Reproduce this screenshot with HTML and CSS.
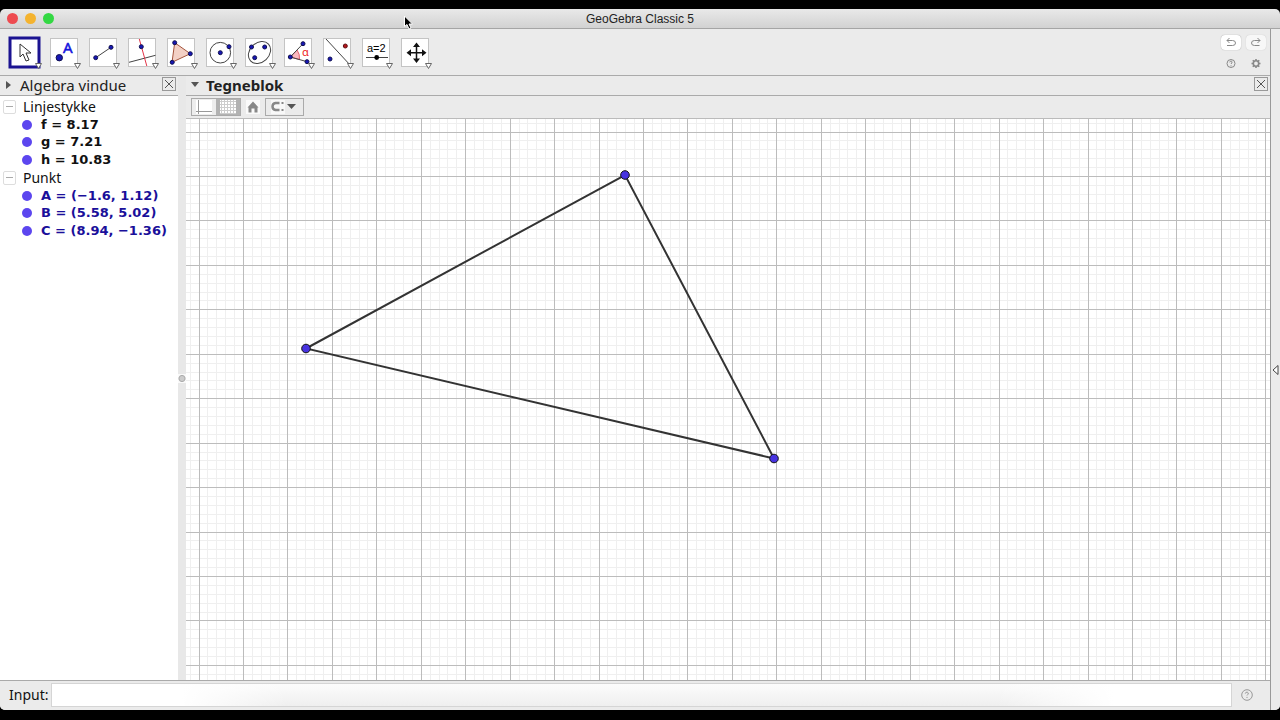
FILE: index.html
```html
<!DOCTYPE html>
<html lang="da">
<head>
<meta charset="utf-8">
<title>GeoGebra Classic 5</title>
<link rel="stylesheet" href="styles.css">
</head>
<body>
<div class="window">
  <header class="titlebar">
    <div class="lights"><button class="light red" aria-label="Luk"></button><button class="light amber" aria-label="Minimer"></button><button class="light green" aria-label="Zoom"></button></div>
    <h1 class="title">GeoGebra Classic 5</h1>
  </header>
  <div class="workspace">
    <main class="main">
      <div class="toolbar">
        <div class="tools">
          <button class="tool" aria-label="Flyt"><svg viewBox="0 0 39 39"><rect class="picked" x="5" y="4" width="29" height="29"/><path d="M15 10V23L18 20L21 27L24 26L21 19H26Z" fill="#fff" stroke="#333"/><path class="more" d="M30.500 29.500H36.500L33.500 34.500Z"/></svg></button>
          <button class="tool" aria-label="Punkt"><svg viewBox="0 0 39 39"><rect class="box" x="6.500" y="4.500" width="27" height="28"/><circle class="pt" cx="15.300" cy="23.700" r="3.200"/><text x="19" y="19" class="letter">A</text><path class="more" d="M30.500 29.500H36.500L33.500 34.500Z"/></svg></button>
          <button class="tool" aria-label="Linjestykke"><svg viewBox="0 0 39 39"><rect class="box" x="6.500" y="4.500" width="27" height="28"/><path class="ink" d="M12.700 23.700L28 13.300"/><circle class="pt" cx="12.700" cy="23.700" r="2"/><circle class="pt" cx="28" cy="13.300" r="2"/><path class="more" d="M30.500 29.500H36.500L33.500 34.500Z"/></svg></button>
          <button class="tool" aria-label="Vinkelret linje"><svg viewBox="0 0 39 39"><rect class="box" x="6.500" y="4.500" width="27" height="28"/><path class="ink" d="M7 28.300L33.500 21.300"/><path d="M17.300 5L24.800 32" stroke="#e33347" fill="none"/><circle class="pt" cx="19.300" cy="12.700" r="2"/><path class="more" d="M30.500 29.500H36.500L33.500 34.500Z"/></svg></button>
          <button class="tool" aria-label="Polygon"><svg viewBox="0 0 39 39"><rect class="box" x="6.500" y="4.500" width="27" height="28"/><path d="M13.700 8.700L29.300 19.700L11 28.300Z" fill="#f3d0c5" stroke="#a4543c"/><circle class="pt" cx="13.700" cy="8.700" r="2"/><circle class="pt" cx="29.300" cy="19.700" r="2"/><circle class="pt" cx="11.200" cy="28.300" r="2"/><path class="more" d="M30.500 29.500H36.500L33.500 34.500Z"/></svg></button>
          <button class="tool" aria-label="Cirkel"><svg viewBox="0 0 39 39"><rect class="box" x="6.500" y="4.500" width="27" height="28"/><circle class="ink" cx="20.300" cy="18.700" r="10.300"/><circle class="pt" cx="20.300" cy="18.700" r="2"/><circle class="pt" cx="29" cy="12.700" r="2"/><path class="more" d="M30.500 29.500H36.500L33.500 34.500Z"/></svg></button>
          <button class="tool" aria-label="Ellipse"><svg viewBox="0 0 39 39"><rect class="box" x="6.500" y="4.500" width="27" height="28"/><ellipse class="ink" cx="20.500" cy="18.500" rx="12.300" ry="9.600" transform="rotate(-43 20.500 18.500)"/><circle class="pt" cx="12.500" cy="13" r="2"/><circle class="pt" cx="25.700" cy="13" r="2"/><circle class="pt" cx="15.700" cy="23.700" r="2"/><path class="more" d="M30.500 29.500H36.500L33.500 34.500Z"/></svg></button>
          <button class="tool" aria-label="Vinkel"><svg viewBox="0 0 39 39"><rect class="box" x="6.500" y="4.500" width="27" height="28"/><path d="M12.300 23L19 16Q22 20 21.500 25.500Z" fill="#fbb9bf" stroke="#e2606c"/><path class="ink" d="M25 9.700L12.300 23L29 27.700"/><text class="alpha" x="24" y="22">α</text><circle class="pt" cx="12.300" cy="23" r="2"/><circle class="pt" cx="25" cy="9.700" r="2"/><circle class="pt" cx="29" cy="27.700" r="2"/><path class="more" d="M30.500 29.500H36.500L33.500 34.500Z"/></svg></button>
          <button class="tool" aria-label="Spejling"><svg viewBox="0 0 39 39"><rect class="box" x="6.500" y="4.500" width="27" height="28"/><path class="ink" d="M9 5L34 32"/><circle class="pt" cx="13" cy="25" r="2"/><circle cx="28.300" cy="12" r="2" fill="#b5161c" stroke="#5e1013"/><path class="more" d="M30.500 29.500H36.500L33.500 34.500Z"/></svg></button>
          <button class="tool" aria-label="Skyder"><svg viewBox="0 0 39 39"><rect class="box" x="6.500" y="4.500" width="27" height="28"/><text class="eq" x="11" y="18">a=2</text><path class="ink" d="M10 23.500H32"/><circle cx="20.700" cy="23.500" r="2.400"/><path class="more" d="M30.500 29.500H36.500L33.500 34.500Z"/></svg></button>
          <button class="tool" aria-label="Flyt tegneblok"><svg viewBox="0 0 39 39"><rect class="box" x="6.500" y="4.500" width="27" height="28"/><path d="M21.500 11V27M13 18.700H30" stroke="#111" stroke-width="1.500"/><path d="M21.500 8.500L25 13H18ZM21.500 29L18 24.500H25ZM11.500 18.700L16 15.200V22.200ZM31.500 18.700L27 15.200V22.200Z" fill="#111"/><path class="more" d="M30.500 29.500H36.500L33.500 34.500Z"/></svg></button>
        </div>
        <div class="actions">
          <button class="act raised" aria-label="Fortryd"><svg viewBox="0 0 20 15"><path d="M6 10.500H11.500Q14.500 10.500 14.500 8T11.500 5.500H6M8.500 3L6 5.500L8.500 8"/></svg></button>
          <button class="act raised faint" aria-label="Gendan"><svg viewBox="0 0 20 15"><path d="M13.500 10.500H8.500Q5.500 10.500 5.500 8T8.500 5.500H14M11.500 3L14 5.500L11.500 8"/></svg></button>
          <button class="act" aria-label="Hjælp"><svg viewBox="0 0 20 15"><circle cx="10" cy="7.500" r="4"/><path d="M8.700 6.300Q9 5 10.200 5.100Q11.600 5.500 10.800 6.900L10 8M10 9.300V10.300"/></svg></button>
          <button class="act" aria-label="Indstillinger"><svg viewBox="0 0 20 15"><circle cx="10" cy="7.500" r="2.700" stroke-width="1.600"/><path d="M10 3V4.500M10 10.500V12M5.500 7.500H7M13 7.500H14.500M6.800 4.300L7.900 5.400M12.100 9.600L13.200 10.700M6.800 10.700L7.900 9.600M12.100 5.400L13.200 4.300" stroke-width="1.600"/></svg></button>
        </div>
      </div>
      <div class="views">
        <section class="algebra">
          <div class="viewhead"><svg class="tri" viewBox="0 0 10 10"><path d="M2 1V9L7 5Z"/></svg><h2 class="viewname">Algebra vindue</h2><button class="close" aria-label="Luk algebra"><svg viewBox="0 0 12 12"><path d="M2 2L10 10M10 2L2 10"/></svg></button></div>
          <div class="tree">
            <div class="group"><button class="fold" aria-label="Fold Linjestykke"></button>Linjestykke</div>
            <div class="item"><i class="dot"></i>f = 8.17</div>
            <div class="item"><i class="dot"></i>g = 7.21</div>
            <div class="item"><i class="dot"></i>h = 10.83</div>
            <div class="group"><button class="fold" aria-label="Fold Punkt"></button>Punkt</div>
            <div class="item blue"><i class="dot"></i>A = (−1.6, 1.12)</div>
            <div class="item blue"><i class="dot"></i>B = (5.58, 5.02)</div>
            <div class="item blue"><i class="dot"></i>C = (8.94, −1.36)</div>
          </div>
        </section>
        <div class="splitter"><i class="grip"></i></div>
        <section class="graphics">
          <div class="viewhead"><svg class="tri" viewBox="0 0 10 10"><path d="M1 2H9L5 7Z"/></svg><h2 class="viewname strong">Tegneblok</h2><button class="close" aria-label="Luk tegneblok"><svg viewBox="0 0 12 12"><path d="M2 2L10 10M10 2L2 10"/></svg></button></div>
          <div class="stylebar">
            <div class="pair">
              <button class="toggle" aria-label="Akser"><svg viewBox="0 0 24 16"><rect x="4" y="1" width="16" height="14" fill="#fff"/><path d="M6.500 1V15M4 12.500H20" stroke="#999"/></svg></button>
              <button class="toggle on" aria-label="Gitter"><svg viewBox="0 0 24 16"><rect x="4" y="1" width="16" height="14" fill="#fff"/><path d="M5.500 1V15M8.500 1V15M11.500 1V15M14.500 1V15M17.500 1V15M4 2.500H20M4 5.500H20M4 8.500H20M4 11.500H20M4 14.500H20" stroke="#ccc"/></svg></button>
            </div>
            <button class="home" aria-label="Standardvisning"><svg viewBox="0 0 14 14"><path d="M7 1.500L12.500 7.500H11.500V12.500H8.500V8.500H5.500V12.500H2.500V7.500H1.500Z" fill="#888"/></svg></button>
            <button class="magnet" aria-label="Punktfangst"><svg viewBox="0 0 37 16"><rect x="5" y="1" width="14" height="14" fill="#f8f8f8"/><path d="M13.500 4H9.500Q6.500 4.500 6.500 7.500T9.500 11H13.500" fill="none" stroke="#888" stroke-width="2.500"/><path d="M15.500 3H17.500V5H15.500ZM15.500 10H17.500V12H15.500Z" fill="#888"/><path d="M21 5H30L25.500 10Z" fill="#555"/></svg></button>
          </div>
          <svg class="board" id="board">
            <path id="minor" class="minor"/><path id="major" class="major"/>
            <path class="segment" d="M120 229.500L439 56L588 339.500Z"/>
            <circle class="vertex" cx="120" cy="229.500" r="4.300"/><circle class="vertex" cx="439" cy="56" r="4.300"/><circle class="vertex" cx="588" cy="339.500" r="4.300"/>
          </svg>
        </section>
      </div>
      <form class="inputbar">
        <label for="cmd">Input:</label><input id="cmd" class="command" type="text">
        <button type="button" class="help" aria-label="Hjælp til input"><svg viewBox="0 0 14 14"><circle cx="7" cy="7" r="5.300"/><path d="M5.300 5.600Q5.500 4 7.200 4.100Q9.300 4.700 7.800 6.500L7 7.500M7 8.900V10"/></svg></button>
      </form>
    </main>
    <button class="dock" aria-label="Vis sidepanel"><svg viewBox="0 0 9 12"><path d="M7 1.500V10.500L2 6Z" fill="#fff" stroke="#444"/></svg></button>
  </div>
</div>
<svg class="pointer" viewBox="0 0 12 16"><path d="M1.500 1V11.500L4 9.500L6 14L8 13L6 9H9.500Z" fill="#000" stroke="#fff"/></svg>
<script src="grid.js"></script>
</body>
</html>
```
FILE: styles.css
```css
* { box-sizing: border-box; }
body { margin: 0; background: #000; font-family: "Noto Sans", sans-serif; font-size: 14px; color: #111; }
button { margin: 0; padding: 0; border: 0; background: none; font: inherit; }
svg { display: block; }
h1, h2 { margin: 0; font-weight: 400; }
.window { height: 100vh; border: solid #000; border-width: 9px 0 10px; display: flex; flex-direction: column; background: #000; }
.titlebar { flex: none; height: 20px; display: grid; grid-template-columns: 1fr auto 1fr; align-items: center; background: linear-gradient(#e9e9e9, #d2d2d2); border-bottom: 1px solid #a5a5a5; border-radius: 5px 5px 0 0; }
.lights { display: flex; gap: 7px; padding-left: 7px; }
.light { width: 11px; height: 11px; border-radius: 50%; }
.red { background: #ee4b50; }
.amber { background: #f4b32f; }
.green { background: #33d843; }
.title { font: 12px "Liberation Sans", sans-serif; color: #222; }
.workspace { flex: 1; min-height: 0; display: flex; background: #ebebeb; border-radius: 0 0 5px 5px; overflow: hidden; }
.main { flex: 1; min-width: 0; display: flex; flex-direction: column; }
.dock { flex: none; width: 10px; border-left: 1px solid #999; display: flex; align-items: center; background: #ebebeb; }
.dock svg { width: 9px; height: 12px; }
.toolbar { flex: none; height: 47px; display: flex; justify-content: space-between; padding: 5px 4px 0 5px; border-bottom: 1px solid #aaa; }
.tools { display: flex; }
.tool, .tool svg { width: 39px; height: 39px; }
.box { fill: #fff; stroke: #c4c4c4; }
.picked { fill: #fff; stroke: #1b1391; stroke-width: 3; }
.ink { fill: none; stroke: #444; }
.pt { fill: #1717b5; stroke: #10104f; }
.more { fill: #fff; stroke: #666; }
.letter { font: 15px "Noto Sans", sans-serif; fill: #1212dd; stroke: #1212dd; stroke-width: 0.500; }
.alpha { font: 11px "Noto Sans", sans-serif; fill: #e22; }
.eq { font: 11px "Liberation Sans", sans-serif; }
.actions { display: grid; grid-template-columns: 20px 20px; grid-auto-rows: 15px; gap: 6px 5px; align-content: start; padding-top: 1px; }
.act svg { width: 20px; height: 15px; fill: none; stroke: #888; }
.raised { background: #fff; border-radius: 4px; box-shadow: 0 0 1px #888; }
.faint { background: #f7f7f7; box-shadow: 0 0 1px #bbb; }
.views { flex: 1; min-height: 0; display: flex; }
.algebra { flex: none; width: 178px; display: flex; flex-direction: column; background: #fff; }
.viewhead { flex: none; height: 20px; display: flex; align-items: center; gap: 6px; padding: 0 2px 2px 4px; background: #ebebeb; border-bottom: 1px solid #aaa; }
.tri { width: 10px; height: 10px; fill: #555; }
.viewname { flex: 1; font-size: 15px; line-height: 18px; color: #222; }
.strong { font-weight: 700; }
.close { width: 14px; height: 14px; border: 1px solid #999; margin-bottom: 1px; }
.close svg { width: 12px; height: 12px; stroke: #555; }
.tree { display: grid; grid-template-rows: repeat(8, 1fr); height: 142px; margin-top: 2px; line-height: 16px; }
.group { display: flex; align-items: center; gap: 7px; padding-left: 3px; }
.fold { width: 13px; height: 14px; border: 1px solid #ddd; border-radius: 2px; background: linear-gradient(#aaa, #aaa) center / 7px 1px no-repeat; }
.item { display: flex; align-items: center; gap: 9px; padding-left: 22px; font-family: "DejaVu Sans", sans-serif; font-size: 13px; font-weight: 700; }
.dot { width: 10px; height: 10px; border-radius: 50%; background: #5c46ef; }
.blue { color: #1a0f9a; }
.splitter { flex: none; width: 8px; display: flex; align-items: center; justify-content: center; background: #e8e8e8; }
.grip { width: 8px; height: 9px; background: radial-gradient(circle, #ccc 2px, #aaa 3px, #fafafa 4px); }
.graphics { flex: 1; min-width: 0; display: flex; flex-direction: column; }
.stylebar { flex: none; height: 23px; display: flex; align-items: center; gap: 5px; padding: 0 5px; border-bottom: 1px solid #bbb; }
.pair { display: flex; border: 1px solid #aaa; }
.toggle { background: #ededed; }
.toggle svg { width: 24px; height: 16px; }
.on { background: #b2b2b2; }
.home { background: #fafafa; }
.home svg { width: 14px; height: 14px; }
.magnet { border: 1px solid #aaa; }
.magnet svg { width: 37px; height: 16px; }
.board { flex: 1; min-height: 0; width: 100%; background: #fff; }
.minor { stroke: #efefef; }
.major { stroke: #bcbcbc; }
.segment { fill: none; stroke: #333; stroke-width: 2; }
.vertex { fill: #4733e0; stroke: #111; }
.inputbar { flex: none; height: 30px; display: flex; align-items: center; padding: 0 16px 2px 9px; border-top: 1px solid #aaa; background: #ebebeb; }
.command { flex: 1; min-width: 0; height: 24px; margin: 0 8px 0 3px; border: 1px solid #d5d5d5; background: linear-gradient(90deg, #fff 11%, transparent 20%, transparent 80%, #fff 90%), linear-gradient(#fcfcfc, #efefef); outline: 0; }
.help svg { width: 14px; height: 14px; fill: none; stroke: #999; }
.pointer { position: absolute; left: 403px; top: 15px; width: 12px; height: 16px; }
```
FILE: grid.js
```js
const board = document.getElementById("board");
const origin = 13;
const step = 44.45 / 5;

function drawGrid() {
  const { width, height } = board.getBoundingClientRect();
  const paths = { minor: "", major: "" };
  for (let i = -2; origin + i * step < Math.max(width, height); i++) {
    const p = Math.floor(origin + i * step) + 0.5;
    const kind = i % 5 === 0 ? "major" : "minor";
    if (p < width) paths[kind] += `M${p} 0V${height}`;
    if (p < height) paths[kind] += `M0 ${p}H${width}`;
  }
  document.getElementById("minor").setAttribute("d", paths.minor);
  document.getElementById("major").setAttribute("d", paths.major);
}

drawGrid();
addEventListener("resize", drawGrid);
```
